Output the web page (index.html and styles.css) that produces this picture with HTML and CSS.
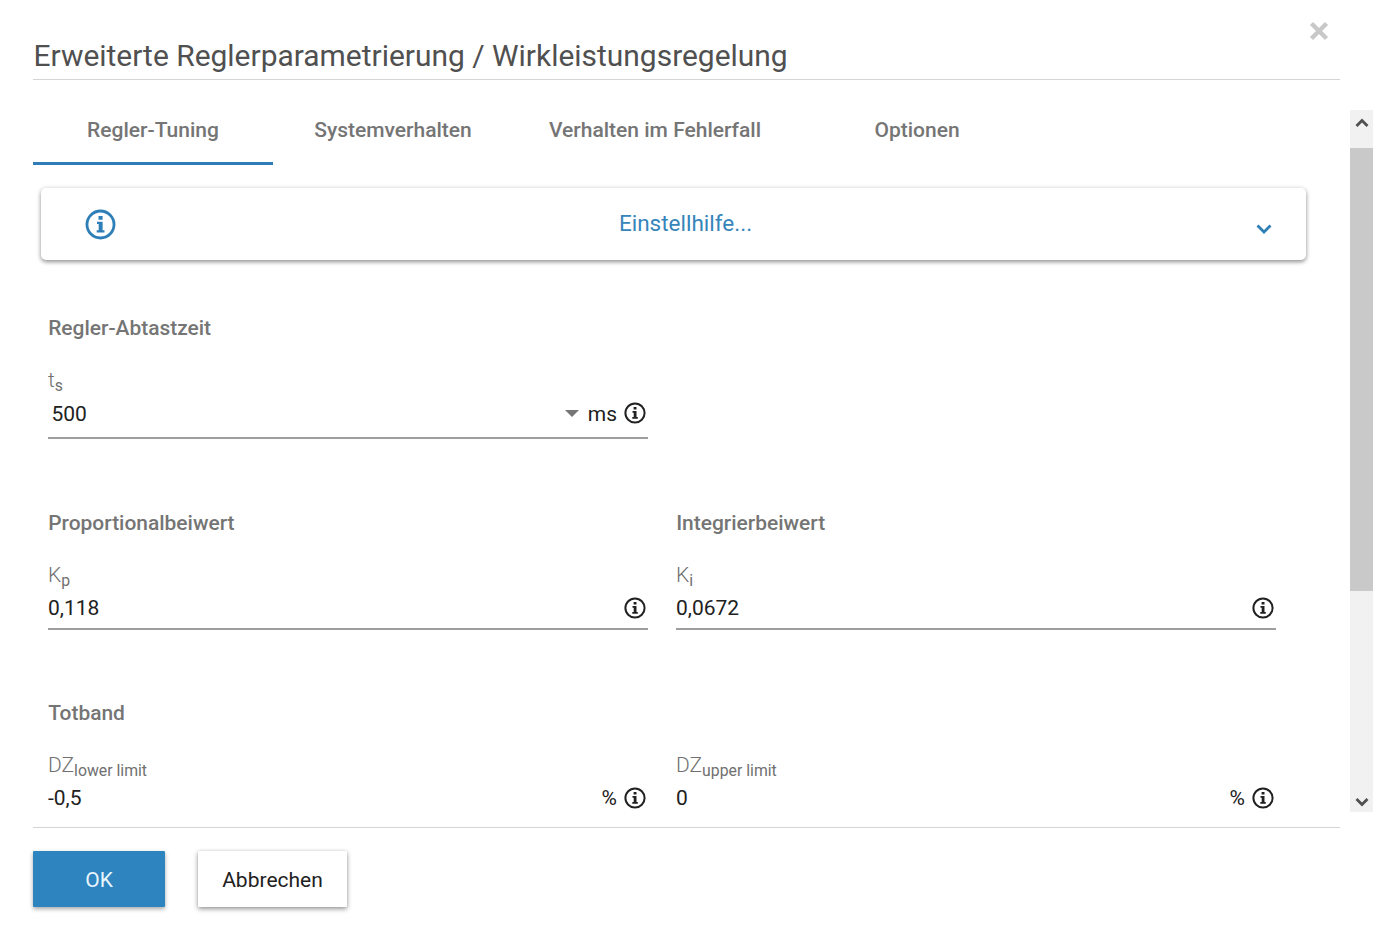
FILE: index.html
```html
<!DOCTYPE html>
<html lang="de">
<head>
<meta charset="utf-8">
<title>Erweiterte Reglerparametrierung</title>
<link rel="stylesheet" href="styles.css">
</head>
<body>
<svg class="defs" width="0" height="0" aria-hidden="true">
  <symbol id="info" viewBox="0 0 22 22">
    <circle cx="11" cy="11" r="9.6" fill="none" stroke="currentColor" stroke-width="2"/>
    <path fill="currentColor" d="M9.6 4.9h2.9v2.7H9.600zM8.500 9h4v6h1.300v1.700H8.300V15h1.400v-4.300H8.500z"/>
  </symbol>
</svg>
<div class="dialog">
  <header class="head">
    <h1 class="title">Erweiterte Reglerparametrierung / Wirkleistungsregelung</h1>
    <svg class="close" width="20" height="20" viewBox="0 0 20 20"><path d="M2.500 2.500l15 15M17.500 2.500l-15 15" stroke="#c8c8c8" stroke-width="4.400" fill="none"/></svg>
  </header>
  <div class="middle">
    <main class="content">
      <nav class="tabs">
        <div class="tab active">Regler-Tuning</div>
        <div class="tab">Systemverhalten</div>
        <div class="tab">Verhalten im Fehlerfall</div>
        <div class="tab">Optionen</div>
      </nav>
      <section class="card">
        <svg class="card-info"><use href="#info"/></svg>
        <span class="card-text">Einstellhilfe...</span>
        <svg class="card-chevron" width="18" height="12" viewBox="0 0 18 12"><path d="M2.500 2.500L9 9l6.500-6.500" fill="none" stroke="#2e7db5" stroke-width="2.800"/></svg>
      </section>
      <section class="group first">
        <h2 class="group-title">Regler-Abtastzeit</h2>
        <div class="fields">
          <div class="field select">
            <label class="label">t<sub>s</sub></label>
            <div class="control">
              <span class="value">500</span>
              <span class="caret"></span>
              <span class="unit">ms</span>
              <svg class="info"><use href="#info"/></svg>
            </div>
          </div>
        </div>
      </section>
      <section class="group second">
        <div class="fields">
          <div class="field">
            <h2 class="group-title">Proportionalbeiwert</h2>
            <label class="label">K<sub>p</sub></label>
            <div class="control">
              <span class="value">0,118</span>
              <svg class="info"><use href="#info"/></svg>
            </div>
          </div>
          <div class="field">
            <h2 class="group-title">Integrierbeiwert</h2>
            <label class="label">K<sub>i</sub></label>
            <div class="control">
              <span class="value">0,0672</span>
              <svg class="info"><use href="#info"/></svg>
            </div>
          </div>
        </div>
      </section>
      <section class="group third">
        <div class="fields">
          <div class="field">
            <h2 class="group-title">Totband</h2>
            <label class="label">DZ<sub>lower limit</sub></label>
            <div class="control">
              <span class="value">-0,5</span>
              <span class="unit">%</span>
              <svg class="info"><use href="#info"/></svg>
            </div>
          </div>
          <div class="field">
            <h2 class="group-title hidden-title">&nbsp;</h2>
            <label class="label">DZ<sub>upper limit</sub></label>
            <div class="control">
              <span class="value">0</span>
              <span class="unit">%</span>
              <svg class="info"><use href="#info"/></svg>
            </div>
          </div>
        </div>
      </section>
    </main>
    <aside class="scrollbar">
      <div class="arrow"><svg width="14" height="10" viewBox="0 0 14 10"><path d="M1.500 8L7 2.500 12.500 8" fill="none" stroke="#505050" stroke-width="2.800"/></svg></div>
      <div class="thumb"></div>
      <div class="track"></div>
      <div class="arrow bottom"><svg width="14" height="10" viewBox="0 0 14 10"><path d="M1.500 2L7 7.500 12.500 2" fill="none" stroke="#505050" stroke-width="2.800"/></svg></div>
    </aside>
  </div>
  <footer class="foot">
    <button class="btn primary">OK</button>
    <button class="btn plain">Abbrechen</button>
  </footer>
</div>
</body>
</html>
```
FILE: styles.css
```css
* { box-sizing: border-box; }
html, body { margin: 0; padding: 0; height: 937px; overflow: hidden; background: #fff; }
body { font-family: Roboto, sans-serif; color: #212121; }
.defs { position: absolute; }
.dialog { width: 1373px; height: 937px; display: flex; flex-direction: column; }
.head { position: relative; height: 80px; margin: 0 33px; border-bottom: 1px solid #d4d4d4; padding-top: 37px; }
.title { margin: 0 0 0 .5px; font-size: 29.950px; line-height: 38px; font-weight: 400; color: #505050; white-space: nowrap; }
.close { position: absolute; left: 1276px; top: 21px; }
.middle { height: 747px; display: flex; }
.content { width: 1317px; margin-left: 33px; overflow: hidden; }
.tabs { display: flex; height: 85px; }
.tab { min-width: 240px; padding: 0 36px; height: 85px; line-height: 100px; text-align: center; font-size: 21px; font-weight: 500; color: #757575; white-space: nowrap; }
.tab.active { border-bottom: 3px solid #2e7db9; }
.card { display: flex; align-items: center; justify-content: center; position: relative; height: 72px; width: 1265px; margin: 23px 0 0 8px; padding-left: 24px; border-radius: 5px; background: #fff; box-shadow: 0 2px 4px rgba(0,0,0,.4), 0 0 6px rgba(0,0,0,.08); }
.card-info { position: absolute; left: 43.500px; top: 20.500px; width: 31px; height: 31px; color: #2e7fb8; }
.card-text { font-size: 22.500px; font-weight: 400; color: #3585bb; margin-top: -3px; }
.card-chevron { position: absolute; left: 1214px; top: 35px; }
.group { padding-left: 15px; }
.group.first { margin-top: 54px; }
.group.second { margin-top: 70px; }
.group.third { margin-top: 69px; }
.fields { display: grid; grid-template-columns: 600px 600px; column-gap: 28px; }
.group-title { margin: 0 0 0 .2px; font-size: 20.950px; line-height: 28px; font-weight: 500; color: #757575; }
.label { display: block; margin-top: 23px; height: 30px; line-height: 30px; font-size: 21px; font-weight: 300; color: #707070; }
.label sub { font-size: 15.800px; vertical-align: -4px; line-height: 0; font-weight: 400; }
.control { display: flex; align-items: center; height: 40px; padding-bottom: 2px; font-size: 21px; color: #212121; border-bottom: 2px solid #9e9e9e; }
.select .control { padding-left: 3.500px; padding-bottom: 5px; height: 44px; }
.third .control { border-bottom-color: transparent; }
.value { flex: 1; }
.caret { width: 0; height: 0; border-left: 7px solid transparent; border-right: 7px solid transparent; border-top: 7px solid #757575; margin-right: 9px; }
.unit { margin-right: 7px; }
.info { width: 22px; height: 22px; margin-right: 2px; color: #212121; margin-top: -1px; }
.scrollbar { width: 23px; height: 702px; margin-top: 30px; background: #f1f1f1; display: flex; flex-direction: column; }
.arrow { height: 38px; display: flex; justify-content: center; padding-top: 8px; }
.arrow.bottom { height: 21px; padding-top: 6px; }
.thumb { height: 443px; background: #c9c9c9; }
.track { flex: 1; }
.foot { display: flex; align-items: flex-start; padding: 23px 33px 0 0; margin: 0 33px; border-top: 1px solid #d4d4d4; }
.btn { height: 56px; border: 0; border-radius: 1px; font-family: Roboto, sans-serif; font-size: 21px; padding: 2px 0 0; }
.primary { width: 132px; background: #2e84bf; color: #e8f4fc; box-shadow: 0 2px 4px rgba(0,0,0,.35); }
.plain { width: 149px; margin-left: 33px; background: #fff; color: #212121; box-shadow: 0 2px 5px rgba(0,0,0,.4), 0 0 3px rgba(0,0,0,.1); }
```
